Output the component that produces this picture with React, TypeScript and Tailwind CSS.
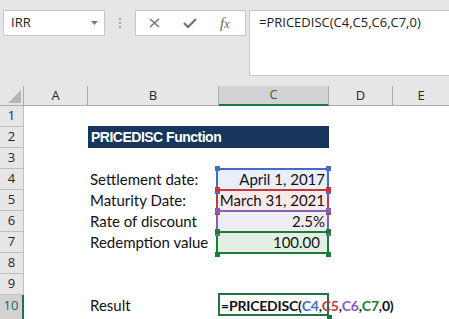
import React from 'react';

type RefCell = {
  value: string;
  border: string;
  fill: string;
  pad: string;
};

// labels in column B, reference boxes in column C
const refRows: Record<number, { label: string } & RefCell> = {
  4: { label: 'Settlement date:', value: 'April 1, 2017', border: 'border-[#3f6fc4]', fill: 'bg-[#e9eef8]', pad: 'pr-[4px]' },
  5: { label: 'Maturity Date:', value: 'March 31, 2021', border: 'border-[#c2393f]', fill: 'bg-[#f9e9e9]', pad: 'pr-[4px]' },
  6: { label: 'Rate of discount', value: '2.5%', border: 'border-[#8260b8]', fill: 'bg-[#f0ecf6]', pad: 'pr-[4px]' },
  7: { label: 'Redemption value', value: '100.00', border: 'border-[#1a7d34]', fill: 'bg-[#e3f1e5]', pad: 'pr-[9px]' },
};

const handleColor: Record<number, string> = {
  4: 'bg-[#3f6fc4]',
  5: 'bg-[#c2393f]',
  6: 'bg-[#8260b8]',
  7: 'bg-[#1a7d34]',
};

const Handle = ({ pos, color }: { pos: string; color: string }) => (
  <span className={`absolute w-[5px] h-[5px] z-20 ${color} ${pos}`} />
);

const RowHeader = ({ n, active }: { n: number; active?: boolean }) => (
  <div
    className={`w-[24px] h-full shrink-0 flex items-center justify-center text-[13px] font-['Open_Sans',sans-serif] ${
      active
        ? 'bg-[#d2d2d2] border-r-2 border-r-[#217346] text-[#1e6b45] pb-[3px]'
        : 'bg-[#e6e6e6] border-b border-[#bfbfbf] border-r border-r-[#bfbfbf] text-[#262626]'
    }`}
  >
    {n}
  </div>
);

const TopBar = () => (
  <div className="h-[86px] flex items-start pt-[10px] pl-[3px] shrink-0">
    <div className="w-[102px] h-[26px] bg-white border border-[#c6c6c6] flex items-center justify-between pl-[7px] pr-[6px] font-['Open_Sans',sans-serif] text-[13px] text-[#222]">
      <span>IRR</span>
      <svg width="7" height="4" viewBox="0 0 7 4">
        <path d="M0 0h7L3.5 4z" fill="#7a7a7a" />
      </svg>
    </div>
    <div className="w-[30px] h-[26px] flex flex-col items-center justify-center gap-[2px]">
      <span className="w-[2px] h-[2px] bg-[#a8a8a8]" />
      <span className="w-[2px] h-[2px] bg-[#a8a8a8]" />
      <span className="w-[2px] h-[2px] bg-[#a8a8a8]" />
    </div>
    <div className="w-[111px] h-[26px] bg-white border border-[#c6c6c6] flex items-center pl-[13px]">
      <svg width="11" height="10" viewBox="0 0 11 10">
        <path d="M1 1l9 8M10 1l-9 8" stroke="#777" strokeWidth="1.6" fill="none" />
      </svg>
      <svg width="14" height="10" viewBox="0 0 14 10" className="ml-[23px]">
        <path d="M1 5l4 4L13 1" stroke="#777" strokeWidth="2.4" fill="none" />
      </svg>
      <span className="ml-[23px] font-['Liberation_Serif',serif] italic text-[15px] text-[#666] leading-none">
        f<span className="text-[12px]">x</span>
      </span>
    </div>
    <div className="ml-[3px] flex-1 h-[66px] bg-white border border-[#c6c6c6] border-r-0 pl-[9px] pt-[2px] font-['Open_Sans',sans-serif] text-[13px] text-[#222]">
      =PRICEDISC(C4,C5,C6,C7,0)
    </div>
  </div>
);

const ColumnHeaders = () => (
  <div className="h-[20px] flex shrink-0 font-['Open_Sans',sans-serif] text-[13px] text-[#262626]">
    <div className="w-[24px] h-full relative border-r border-b border-[#ababab]">
      <svg width="13" height="13" viewBox="0 0 13 13" className="absolute left-[8px] top-[4px]">
        <path d="M13 0v13H0z" fill="#b5b5b5" />
      </svg>
    </div>
    <div className="w-[64px] border-r border-b border-[#ababab] flex items-center justify-center">A</div>
    <div className="w-[131px] border-r border-b border-[#ababab] flex items-center justify-center">B</div>
    <div className="w-[110px] bg-[#d2d2d2] border-r border-r-[#ababab] border-b-2 border-b-[#217346] flex items-center justify-center text-[#1e6b45]">
      C
    </div>
    <div className="w-[64px] border-r border-b border-[#ababab] flex items-center justify-center">D</div>
    <div className="flex-1 border-b border-[#ababab] flex items-center justify-center">E</div>
  </div>
);

const cellFont = "font-['Lato',sans-serif] text-[15px] text-[#111]";

const BodyRow = ({ n }: { n: number }) => {
  const ref = refRows[n];
  return (
    <div className={`${n === 10 ? 'flex-1' : 'h-[21px]'} flex bg-white shrink-0`}>
      <RowHeader n={n} active={n === 10} />
      <div className="w-[64px] shrink-0" />
      {n === 2 ? (
        <div className="w-[241px] shrink-0 -mt-[1px] h-[22px] bg-[#17365d] pl-[3px] flex items-center font-['Liberation_Sans',sans-serif] font-bold text-[14px] tracking-[-0.5px] text-white">
          PRICEDISC Function
        </div>
      ) : (
        <>
          <div className={`w-[131px] shrink-0 pl-[2px] leading-[21px] whitespace-nowrap ${cellFont}`}>
            {ref ? ref.label : n === 10 ? 'Result' : ''}
          </div>
          <div className={`w-[110px] h-[21px] shrink-0 relative leading-[21px] ${cellFont}`}>
            {ref && (
              <>
                <div className={`absolute -left-[3px] right-0 -top-[1px] h-[23px] border-2 ${ref.border} ${ref.fill}`} />
                <div className={`relative z-10 text-right ${ref.pad}`}>{ref.value}</div>
                <Handle pos="-left-[4px] -top-[3px]" color={handleColor[n]} />
                <Handle pos="-right-[2px] -top-[3px]" color={handleColor[n]} />
                <Handle pos="-left-[4px] -bottom-[4px]" color={handleColor[n]} />
                <Handle pos="-right-[2px] -bottom-[4px]" color={handleColor[n]} />
              </>
            )}
            {n === 10 && (
              <>
                <div className="absolute -left-[1px] right-0 -top-[2px] h-[23px] border-2 border-[#217346]" />
                <Handle pos="-right-[3px] -bottom-[4px]" color="bg-[#217346]" />
                <div className="relative z-10 pl-[2px] font-bold text-[14px] tracking-[-0.2px] whitespace-nowrap flex items-center h-[21px]">
                  <span>=PRICEDISC(</span>
                  <span className="text-[#3f6fc4]">C4</span>,
                  <span className="text-[#c2393f]">C5</span>,
                  <span className="text-[#8260b8]">C6</span>,
                  <span className="text-[#1a7d34]">C7</span>
                  <span>,0)</span>
                  <span className="ml-[2px] w-[2px] h-[19px] bg-[#111]" />
                </div>
              </>
            )}
          </div>
        </>
      )}
      <div className="w-[64px] shrink-0" />
      <div className="flex-1" />
    </div>
  );
};

export default function App() {
  return (
    <div className="w-[449px] h-[319px] overflow-hidden bg-[#e6e6e6] flex flex-col">
      <TopBar />
      <ColumnHeaders />
      {[1, 2, 3, 4, 5, 6, 7, 8, 9, 10].map((n) => (
        <BodyRow key={n} n={n} />
      ))}
    </div>
  );
}
